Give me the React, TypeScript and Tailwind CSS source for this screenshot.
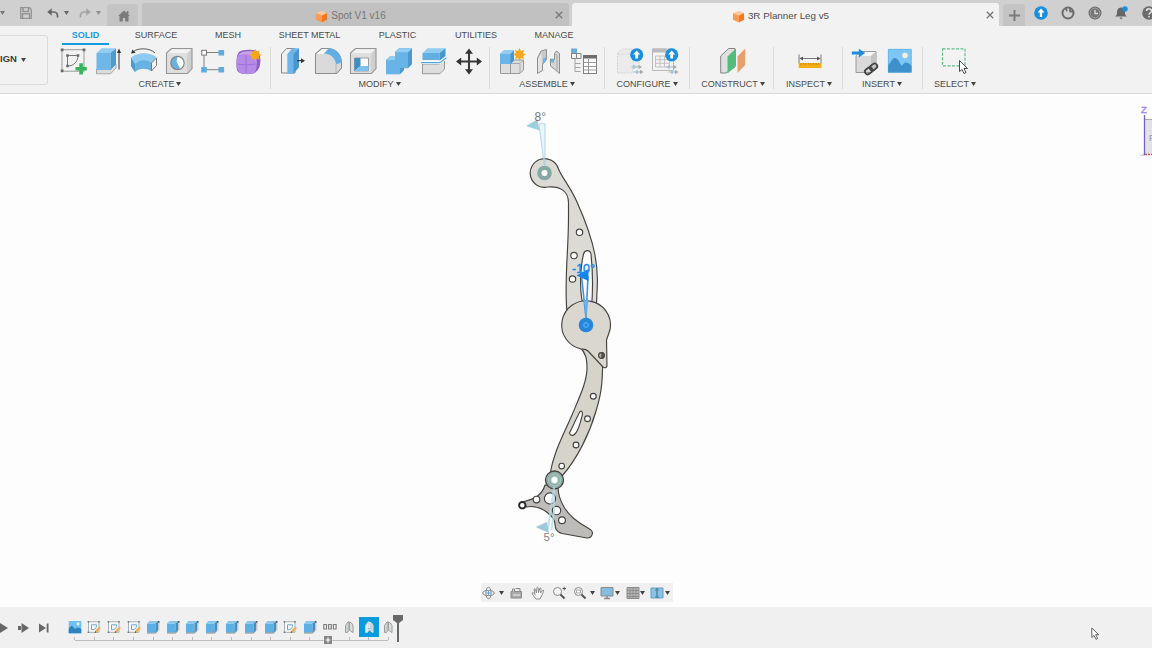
import React from "react";

type Kids = { children?: React.ReactNode };

function Ico({ children }: Kids) {
  return (
    <svg className="h-7 w-7 shrink-0 overflow-visible" viewBox="0 0 28 28" fill="none">
      {children}
    </svg>
  );
}

const Star = ({ x, y, r = 6.3 }: { x: number; y: number; r?: number }) => {
  const pts: string[] = [];
  for (let i = 0; i < 16; i++) {
    const a = (i * Math.PI) / 8 - Math.PI / 2;
    const q = i % 2 ? r * 0.58 : r;
    pts.push(`${x + Math.cos(a) * q},${y + Math.sin(a) * q}`);
  }
  return <polygon points={pts.join(" ")} fill="#f5a81c" />;
};

const UpBadge = () => (
  <>
    <circle cx="20.7" cy="7.8" r="6.6" fill="#1a8fe0" />
    <path d="M20.7 3.6l3.6 4h-2.2v4h-2.8v-4h-2.2z" fill="#fff" />
    <path d="M15.5 20h7M17.5 25h7" stroke="#a5adb1" strokeWidth="1" />
    <path d="M22.5 17.8l3.5 2.2-3.5 2.2zM24 22.8l3.5 2.2-3.5 2.2z" fill="#a5adb1" />
    <path d="M18 18v4M21 23v4" stroke="#8fc7ea" strokeWidth="1.4" />
  </>
);

const Sketch = () => (
  <Ico>
    <rect x="2" y="2.7" width="22" height="21.5" stroke="#9a9a9a" strokeWidth="1" />
    <path d="M7.500 8.500h10.500c0 6-4 10.500-10.500 10.500z" stroke="#777" strokeWidth="1" />
    <path d="M.7 1.500h2.800v2.800H.7zM22.600 1.500h2.800v2.800h-2.800zM.7 22.500h2.800v2.800H.7zM6.200 7.200h2.600v2.600H6.200zM16.700 7.200h2.600v2.600h-2.600zM6.200 17.700h2.600v2.600H6.200z" fill="#6a6a6a" />
    <path d="M19.300 16.200h3.600v3.800h3.900v3.600h-3.900v3.800h-3.600v-3.800h-3.800V20h3.800z" fill="#37b35e" />
  </Ico>
);
const Extrude = () => (
  <Ico>
    <path d="M1.500 22h14l5.500-5v4l-5.500 5.800h-14z" fill="#dcdcdc" stroke="#989898" strokeWidth=".8" />
    <path d="M1.500 6h14v17h-14z" fill="#6fb7e8" />
    <path d="M1.500 6l5-4.700H21L15.500 6z" fill="#92cdf2" />
    <path d="M15.500 6L21 1.300V17l-5.500 6z" fill="#4c9bd0" />
    <path d="M24 5v17.500" stroke="#444" strokeWidth="1.100" />
    <path d="M24 1.500l2 4.600h-4z" fill="#333" />
  </Ico>
);
const Revolve = () => (
  <Ico>
    <path d="M3.500 4.500C8 .7 20 .7 25 6" stroke="#5a5a5a" strokeWidth="1" />
    <path d="M1 6.500l1.500-4 3 3.300z" fill="#333" />
    <path d="M1 11C7 5 20 5 26.500 10.500L21 16v8c-5.500-3-11-3-16 1l-4-6z" fill="#68b1e3" />
    <path d="M1 11C7 5 20 5 26.500 10.500L21 15.500C15 12 10 12.500 5 17z" fill="#8fcbf1" />
    <path d="M1 11l4 6v8l-4-6z" fill="#4c99cd" />
    <path d="M26.500 11v7.500L21.500 24v-8z" fill="#f6f6f6" stroke="#777" strokeWidth="1" />
  </Ico>
);
const Block = () => (
  <>
    <path d="M1.500 6l5-4.500h20.500v20L22.500 26.500h-21z" fill="#cfcfcf" stroke="#969696" strokeWidth="1.100" />
    <path d="M2.200 6.500l4.800-4.200h19L22 6.500z" fill="#f3f3f3" />
    <path d="M2.100 6.500H22V26H2.100z" fill="#dedede" />
  </>
);
const Hole = () => (
  <Ico>
    <Block />
    <circle cx="12.500" cy="16" r="6.600" fill="#69b3e4" stroke="#858585" strokeWidth="1.300" />
    <path d="M12.500 10a6 6 0 016 6c0 3-2 5-4 5.700 1-3-5-5-2-11.700z" fill="#fff" />
  </Ico>
);
const Pattern = () => (
  <Ico>
    <path d="M6 5.500h14M4 8v14M6 22.700h14" stroke="#808080" strokeWidth="1" />
    <rect x="1.700" y="3.300" width="4.800" height="4.800" fill="#fff" stroke="#777" />
    <path d="M18.500 3h5.600v5.600h-5.600zM18.500 20h5.600v5.600h-5.600zM1.200 20h5.600v5.600H1.200z" fill="#5aace1" />
  </Ico>
);
const Form = () => (
  <Ico>
    <path d="M4 5c4-3 16-3 19 0s3 12 1 16-5 6-10 6S3 27 2 23s-1-15 2-18z" fill="#8f5dc4" />
    <path d="M3 9c3-2 14-2 17 0s2 13 0 16-13 3-16 0-3-13-1-16z" fill="#b58be8" />
    <path d="M3 8.500C5 3.500 17 3 21 6l-1 3C15 7 8 7 3 8.500z" fill="#c8a5f2" />
    <path d="M11 8v18M2.500 17c5 1 12 1 18 0" stroke="#9a6bd6" strokeWidth=".9" />
    <Star x={20.300} y={8} />
  </Ico>
);
const PressPull = () => (
  <Ico>
    <path d="M2.500 7l5-5.500H16V26H2.500z" fill="#f0f0f0" stroke="#868686" />
    <path d="M8.300 7l5-5.700H20V20l-5.500 6.700H8.300z" fill="#6cb5e6" />
    <path d="M14.500 7L20 1.500V20l-5.500 6.500z" fill="#4996cc" />
    <path d="M18 13.700h5" stroke="#333" strokeWidth="1.200" />
    <path d="M22 11.200l4 2.500-4 2.500z" fill="#333" />
  </Ico>
);
const Fillet = () => (
  <Ico>
    <path d="M1.500 7l6-5.500H15c7 1 12 6 12.500 14V21l-5 5.500h-21z" fill="#dadada" stroke="#8f8f8f" strokeWidth="1.100" />
    <path d="M2.500 7L8 2.300h6L9.500 7z" fill="#fafafa" />
    <path d="M10 6.500l5-5.200c7 .5 12.500 6 12.500 14L22 17.500c-.5-6-5-11-12-11z" fill="#62aee2" />
    <path d="M22 17.500v8.500" stroke="#b5b5b5" />
  </Ico>
);
const Shell = () => (
  <Ico>
    <Block />
    <path d="M5.500 11h14v13h-14z" fill="#fff" stroke="#9d9d9d" />
    <path d="M5.500 11h6v8l-6 5z" fill="#3d8dc7" />
    <path d="M11.500 19h8v5h-14z" fill="#7cc2ef" />
  </Ico>
);
const Combine = () => (
  <Ico>
    <path d="M2 13l4-3.500h5V5l4-3.700h13v16l-4 4h-4v2l-4 4H2z" fill="#4c99cf" />
    <path d="M2 13h9V5.500h13V21h-8v6H2z" fill="#69b4e7" />
    <path d="M2 13l4-3.500h5V13zM11 5.500l4-4.200h13l-4 4.200z" fill="#91cef3" />
  </Ico>
);
const Split = () => (
  <Ico>
    <path d="M3.500 17h17l5-5v10l-4.500 4.700H3.500z" fill="#dedede" stroke="#999" />
    <path d="M3.500 6h17v7h-17z" fill="#64afe1" />
    <path d="M3.500 6l5-4.700h18L20.500 6z" fill="#91cdf3" />
    <path d="M20.500 6l6-4.700v8l-6 4.700z" fill="#4996cc" />
    <path d="M2 15.500h19l6.500-5" stroke="#fff" strokeWidth="3" />
    <path d="M2 15.700h19l6.500-5" stroke="#49a4df" strokeWidth="1.200" />
  </Ico>
);
const Move = () => (
  <Ico>
    <path d="M15 5v19M5.500 14.500h19" stroke="#3b3b3b" strokeWidth="2.100" />
    <path d="M15 1.500l4 5.200h-8zM15 27.500l4-5.200h-8zM2 14.500l5.200-4v8zM28 14.500l-5.200-4v8z" fill="#333" />
  </Ico>
);
const NewComponent = () => (
  <Ico>
    <path d="M2.500 16h10v10.500h-10zM12.500 16l3-3h10v10l-3.500 3.500h-9.500z" fill="#dedede" stroke="#999" />
    <path d="M13 16.500h9l3-3M22 17v9" stroke="#aaa" />
    <path d="M2 7l4-3.500h10v10L13 17H2z" fill="#4996cc" />
    <path d="M2 7h10.500v10H2z" fill="#69b5e8" />
    <path d="M2 7l4-3.500h10L12.500 7z" fill="#91cdf3" />
    <Star x={21.500} y={7.500} r={6.500} />
  </Ico>
);
const Joint = () => (
  <Ico>
    <path d="M4.500 11L8 4l5.500-1.500v10l-2 2.500-2 2v6.500l-5 3z" fill="#c9c9c9" stroke="#8f8f8f" />
    <path d="M5 12l3.500-6L9 17v6l-4 2.500z" fill="#e3e3e3" />
    <path d="M17.500 12l4 .5V6.500l2-2.500 3 2.500v20L22 22.500l-4.500-3.500z" fill="#d5d5d5" stroke="#8f8f8f" />
    <path d="M21.500 6.500l2.500 1.800v15" stroke="#aaa" />
    <path d="M10 11.500l3-1v3.500l-3 3.500zM18 12.500h3v3.500l-3-1z" fill="#68b4e5" />
  </Ico>
);
const BomTable = () => (
  <Ico>
    <path d="M3 1.500h6v6H3z" fill="#65aede" />
    <path d="M3.500 6.500h5v5h-5zM8.500 6.500h4.500v5H8.500z" fill="#f3f3f3" stroke="#858585" />
    <path d="M7 12v12.500h5.500M7 16.500h5.500M7 20.500h5.500" stroke="#a5a5a5" />
    <rect x="15.500" y="8.500" width="13" height="18" fill="#fff" stroke="#808080" />
    <path d="M15 8h14v3.500H15z" fill="#6d6d6d" />
    <path d="M15.500 15.500h13M15.500 19.500h13M15.500 23h13M20.500 12v14" stroke="#9a9a9a" />
  </Ico>
);
const ConfigBlock = () => (
  <Ico>
    <path d="M1.500 6.500l5-4.500H18l5 5v12h-6v7H1.500z" fill="#ebebeb" stroke="#d2d2d2" strokeDasharray="2 1" />
    <path d="M2 7h15v12" stroke="#dcdcdc" />
    <UpBadge />
  </Ico>
);
const ConfigTable = () => (
  <Ico>
    <path d="M1.500 2h21v21.500h-21z" fill="#f3f3f3" stroke="#b8b8b8" />
    <path d="M1.500 1.500h14v4h-14z" fill="#bbb" />
    <path d="M4.500 9h14v11h-14zM4.500 12.700h14M4.500 16.300h14M9 9v11M13.500 9v11" stroke="#c2c2c2" />
    <UpBadge />
  </Ico>
);
const Construct = () => (
  <Ico>
    <path d="M1.700 9l8-7.500H16V20l-9 6H1.700z" fill="#e0e0e0" stroke="#858585" />
    <path d="M8.500 9.500l8.500-8v17l-8.500 8z" fill="#52bd7a" />
    <path d="M18.500 9.500l7.800-8v16.500l-7.800 8z" fill="#e5a06d" />
  </Ico>
);
const Inspect = () => (
  <Ico>
    <path d="M4 7.500v9M26 7.500v9M5 11.500h20" stroke="#787878" />
    <path d="M4.500 11.500L8 9.500v4zM25.500 11.500L22 9.500v4z" fill="#555" />
    <path d="M3.700 16h22.800v5H3.700z" fill="#f5ad15" />
    <path d="M6 16v2M8.500 16v1.500M11 16v2M13.500 16v1.500M16 16v2M18.500 16v1.500M21 16v2M23.500 16v1.500" stroke="#b7780b" strokeWidth=".7" />
  </Ico>
);
const InsertLink = () => (
  <Ico>
    <path d="M5 9l4-4.500h16V20l-4 5.500H5z" fill="#dadada" stroke="#9a9a9a" />
    <path d="M5.500 9h14l5-4H9.500z" fill="#f8f8f8" />
    <path d="M20 9l5-4.500V20l-5 5z" fill="#c3c3c3" />
    <path d="M.8 4.500h7V1.700l6.400 4.400-6.400 4.400V7.600h-7z" fill="#1d8edd" />
    <g transform="rotate(-38 20 22)" stroke="#454545" strokeWidth="1.800">
      <rect x="13" y="19.300" width="8" height="5.400" rx="2.700" />
      <rect x="19.200" y="19.300" width="8" height="5.400" rx="2.700" />
    </g>
  </Ico>
);
const Picture = () => (
  <Ico>
    <path d="M2 2h23.500v23.500H2z" fill="#7dc6f6" />
    <path d="M2 18c3-2 4-7 7-7s5 6 7 8c2-4 5-5 9.500 0v6.500H2z" fill="#3d90c9" />
    <circle cx="19" cy="8.500" r="2.700" fill="#f4f1db" />
    <path d="M2.300 2.300h23v23h-23z" stroke="#5ba6d5" strokeWidth=".6" />
  </Ico>
);
const Select = () => (
  <Ico>
    <rect x="1.500" y="1.800" width="22.500" height="17" stroke="#5cbf81" strokeWidth="1.200" strokeDasharray="3 1.500" />
    <path d="M18.500 13.500v11l2.500-2 2 4 2-1-2-4h3.500z" fill="#fff" stroke="#4c4c4c" />
  </Ico>
);

const Caret = ({ className = "text-[#444]" }: { className?: string }) => (
  <svg className={`h-1 w-[5px] shrink-0 ${className}`} viewBox="0 0 5 4">
    <path d="M0 0h5L2.500 4z" fill="currentColor" />
  </svg>
);

const groups: { name: string; box: string; label: string; icons: React.FC[] }[] = [
  { name: "CREATE", box: "w-[219px] border-r", label: "pr-[2px]", icons: [Sketch, Extrude, Revolve, Hole, Pattern, Form] },
  { name: "MODIFY", box: "w-[219px] border-r", label: "pr-[1px]", icons: [PressPull, Fillet, Shell, Combine, Split, Move] },
  { name: "ASSEMBLE", box: "w-[115px] border-r", label: "", icons: [NewComponent, Joint, BomTable] },
  { name: "CONFIGURE", box: "w-[85px] border-r", label: "", icons: [ConfigBlock, ConfigTable] },
  { name: "CONSTRUCT", box: "w-[84px] border-r pl-[3px]", label: "", icons: [Construct] },
  { name: "INSPECT", box: "w-[69px] border-r pl-[2px]", label: "", icons: [Inspect] },
  { name: "INSERT", box: "w-[80px] border-r", label: "pr-[1px]", icons: [InsertLink, Picture] },
  { name: "SELECT", box: "w-[64px]", label: "", icons: [Select] },
];

const tabs = [
  { name: "SURFACE", w: "w-[94px]" },
  { name: "MESH", w: "w-[50px]" },
  { name: "SHEET METAL", w: "w-[113px]" },
  { name: "PLASTIC", w: "w-[63px]" },
  { name: "UTILITIES", w: "w-[94px]" },
  { name: "MANAGE", w: "w-[62px]" },
];

const Cube = () => (
  <svg className="h-[13px] w-[13px]" viewBox="0 0 13 14">
    <path d="M.5 3.500L7 .7l5.500 2.500L7 6z" fill="#f9c89c" />
    <path d="M.5 3.500L7 6v7.500L.5 10.500z" fill="#fa9a55" />
    <path d="M12.500 3.200L7 6v7.500l5.500-3z" fill="#f5761c" />
  </svg>
);

const Close = () => (
  <svg className="h-2 w-2" viewBox="0 0 8 8">
    <path d="M.8.800l6.400 6.400M7.200.800L.8 7.200" stroke="#777" strokeWidth="1.300" />
  </svg>
);

function TitleBar() {
  return (
    <header className="flex h-[26px] shrink-0 items-end bg-[#d0d0d0]">
      <div className="flex h-[26px] w-[107px] items-center text-[#777]">
        <Caret className="text-[#777]" />
        <svg className="ml-[15px] h-3 w-3" viewBox="0 0 12 12">
          <path d="M.7.7h8.800l1.800 1.800v8.800H.7z" fill="none" stroke="#959595" strokeWidth="1.300" />
          <path d="M3 1v3.500h5.500V1M2.500 11V6.800h7V11" fill="none" stroke="#959595" strokeWidth="1.500" />
        </svg>
        <svg className="ml-[15px] h-[11px] w-3" viewBox="0 0 12 11">
          <path d="M2 4h5c2.500 0 4 2 3.500 5.500" fill="none" stroke="#666" strokeWidth="1.700" />
          <path d="M.2 4L4.700.2v7.600z" fill="#666" />
        </svg>
        <Caret className="ml-[5px] text-[#666]" />
        <svg className="ml-[10px] h-[11px] w-3" viewBox="0 0 12 11">
          <path d="M10 4H5C2.500 4 1 6 1.500 9.500" fill="none" stroke="#a3a3a3" strokeWidth="1.600" />
          <path d="M11.800 4L7.300.2v7.600z" fill="#a3a3a3" />
        </svg>
        <Caret className="ml-[5px] text-[#8f8f8f]" />
      </div>
      <div className="flex h-[22px] w-[31px] items-center justify-center rounded-t-[3px] bg-[#c4c4c4] pl-[3px] pt-[2px]">
        <svg className="h-3 w-3" viewBox="0 0 12 12">
          <path d="M6 .5L12 6h-1.500v5.500H7.200V8H4.800v3.500H1.500V6H0z" fill="#7b7b7b" />
          <path d="M8.800 1h1.700v3H8.800z" fill="#7b7b7b" />
        </svg>
      </div>
      <div className="ml-1 flex h-[23px] w-[427px] items-center justify-center rounded-t-[3px] bg-[#c1c1c1]">
        <div className="flex flex-1 items-center justify-center gap-[3px] pl-[4px] pt-[3px] text-[10px] leading-[14px] text-[#777]">
          <Cube />
          <span>Spot V1 v16</span>
        </div>
        <div className="pr-[6px]"><Close /></div>
      </div>
      <div className="ml-[3px] flex h-[23px] w-[427px] items-center rounded-t-[3px] bg-[#f2f2f2]">
        <div className="flex flex-1 items-center justify-center gap-[3px] pl-[3px] pt-[3px] text-[9.800px] leading-[14px] text-[#4e4e4e]">
          <Cube />
          <span>3R Planner Leg v5</span>
        </div>
        <div className="pr-[5px]"><Close /></div>
      </div>
      <div className="ml-1 flex h-[22px] w-[22px] items-center justify-center rounded-t-[3px] bg-[#c4c4c4]">
        <svg className="h-[11px] w-[11px]" viewBox="0 0 11 11"><path d="M5.500 0v11M0 5.500h11" stroke="#7b7b7b" strokeWidth="2" /></svg>
      </div>
      <div className="flex h-[26px] w-[127px] items-center gap-[13px] overflow-hidden pl-[9px]">
        <svg className="h-[14px] w-[14px] shrink-0" viewBox="0 0 14 14">
          <circle cx="7" cy="7" r="6.800" fill="#168fe0" />
          <path d="M7 2.500L10.500 6.500H8.200V11H5.800V6.500H3.500z" fill="#fff" />
        </svg>
        <svg className="h-[14px] w-[14px] shrink-0" viewBox="0 0 14 14">
          <circle cx="7" cy="7" r="5.500" fill="#d0d0d0" stroke="#6c6c6c" strokeWidth="2" />
          <path d="M4.500 2.500l1.500 3M8.500 5.500h3.500M9 2v3.500" fill="none" stroke="#6c6c6c" strokeWidth="1.800" />
          <path d="M3 4l2.500 1.500" stroke="#d0d0d0" strokeWidth="1" />
        </svg>
        <svg className="h-[14px] w-[14px] shrink-0" viewBox="0 0 14 14">
          <circle cx="7" cy="7" r="5.600" fill="#777" stroke="#6c6c6c" strokeWidth="1.800" />
          <circle cx="7" cy="7" r="4.900" fill="none" stroke="#b5b5b5" strokeWidth=".7" />
          <path d="M7 4v3.500h3" fill="none" stroke="#d9d9d9" strokeWidth="1.400" />
        </svg>
        <svg className="h-[14px] w-[14px] shrink-0" viewBox="0 0 14 14">
          <path d="M6 1.500c3 0 4 2.500 4 5s.5 3 2 4H0c1.500-1 2-2 2-4s1-5 4-5zM4.500 11.500h3L6 13.500z" fill="#666" />
          <circle cx="10" cy="3" r="2.700" fill="#168fe0" />
        </svg>
        <svg className="h-[14px] w-[14px] shrink-0" viewBox="0 0 14 14">
          <circle cx="7" cy="7" r="6.800" fill="#6c6c6c" />
          <path d="M4.500 5c0-3 5-3 5 0 0 2-2.500 2-2.500 3.700M7 10v1.500" fill="none" stroke="#e5e5e5" strokeWidth="1.500" />
        </svg>
      </div>
    </header>
  );
}

function Toolbar() {
  return (
    <div className="flex h-[68px] shrink-0 border-b border-[#d8d8d8] bg-[#f2f2f2] text-[9px] text-[#4b4b4b]">
      <div className="mt-[9px] flex h-[50px] w-12 items-center gap-[4px] rounded-r-[3px] border border-l-0 border-[#dadada] pb-[1px] text-[9.500px] font-bold text-[#3b3b3b]">
        <span>IGN</span>
        <Caret />
      </div>
      <div className="flex flex-col pl-1">
        <nav className="flex h-[19px] pl-[10px]">
          <div className="flex w-[47px] flex-col items-center justify-between border-b-2 border-[#169ce0] pt-[4px] font-bold leading-[11px] text-[#189ade]">SOLID</div>
          {tabs.map((t) => (
            <div key={t.name} className={`pt-[4px] text-center leading-[11px] ${t.w}`}>{t.name}</div>
          ))}
        </nav>
        <div className="flex pt-[2px]">
          {groups.map((g) => (
            <div key={g.name} className={`flex h-[42px] flex-col items-center border-[#d9d9d9] ${g.box}`}>
              <div className="flex gap-[7px]">
                {g.icons.map((Icon, i) => <Icon key={i} />)}
              </div>
              <div className={`mt-[4px] flex items-center gap-[2px] leading-[11px] ${g.label}`}>
                <span>{g.name}</span>
                <Caret className="mb-[1px] text-[#444]" />
              </div>
            </div>
          ))}
        </div>
      </div>
    </div>
  );
}

function Leg() {
  return (
    <svg className="block h-[489px] w-[1152px]" viewBox="0 94 1152 489" fill="none">
      <g stroke="#45433f" strokeWidth="1.150" strokeLinejoin="round">
        <path
          fill="#dcdad4"
          fillRule="evenodd"
          d="M567 312C564 284 568.500 250 568.500 218V203C568.500 191 560 186 548 187A14.400 14.400 0 1 1 558.300 168.500C562 178 570 186 577 202C585 220 592 239 595 255C599 277 597 290 596 312ZM584 308C579 294 580 269 583.500 254C585 249.500 590 249.500 591 254C592.500 268 593 290 591.500 308Z"
        />
        <path fill="#d5d3ca" d="M579 346C586 353 587 359 587 368C587 382 579 398 572 415C561 440 554 452 550 474L562 476C578 458 590 432 596 411C600 398 603 386 602.500 360L590 340Z" />
        <path fill="#d9d7d0" d="M606.500 340L607 366Q606 369 603 367L588 351Q586 349 582 349.200A24.400 24.400 0 1 1 610.200 329Q609 333 606.500 340Z" />
        <path fill="#fff" d="M580 411.500C576 419 572 428 569.500 433C570 436 573 436 575 434C579 430 581 420 582.500 414Q582 410 580 411.500Z" />
        <path fill="#bdbcb9" d="M545 485C542 495 535 499 524 501.500L526 507C537 505 544 509 550 515C555 519 555 523 555.500 528Q557 532 562 533.500L587 538Q592 538 592.500 533Q592 530 588 528C577 522 569 516 564 507C560 500 558 495 558 487Z" />
        <circle cx="601.500" cy="355.500" r="2.900" fill="#b5b3ac" />
        <path d="M601.500 352.600A2.900 2.900 0 0 1 601.500 358.400Z" fill="#55534e" strokeWidth=".5" />
        <g fill="#fff">
          <circle cx="579.500" cy="232.300" r="3.200" />
          <circle cx="574" cy="255.500" r="3.200" />
          <circle cx="572.500" cy="279" r="3.200" />
          <circle cx="593.300" cy="396.300" r="2.900" />
          <circle cx="587.500" cy="418.700" r="2.900" />
          <circle cx="576" cy="445" r="2.900" />
          <circle cx="561.700" cy="466" r="2.800" />
          <circle cx="536.500" cy="499.500" r="3.300" />
          <circle cx="550" cy="498.500" r="5.600" />
          <circle cx="556.500" cy="510.500" r="4.200" />
          <circle cx="562" cy="520.300" r="3.400" />
          <circle cx="522.300" cy="505.200" r="3.200" strokeWidth="1.900" stroke="#282828" />
        </g>
        <circle cx="554.500" cy="480" r="9" fill="#91aaa7" strokeWidth="1.300" />
      </g>
      <circle cx="544.500" cy="173" r="5.500" fill="#fff" stroke="#82a9a4" strokeWidth="3.500" />
      <circle cx="544.500" cy="173" r="3.700" stroke="#668883" strokeWidth=".8" />
      <circle cx="554.500" cy="480" r="6" stroke="#a9cfc8" strokeWidth="1" />
      <circle cx="554.500" cy="480" r="3.500" fill="#fff" stroke="#b8d8d2" strokeWidth="1" />
      <path d="M544.500 166L539 125C541 123 543 123 545 124V165" fill="#c5e3ed" fillOpacity=".3" stroke="#a4cedb" strokeOpacity=".7" strokeWidth="1.200" />
      <path d="M526 126L537.500 119.500L539.500 130.500Z" fill="#9dcfe1" />
      <path d="M554 487V512L551.500 530M554 487L548 529" stroke="#b4d9e5" strokeOpacity=".75" strokeWidth="2" />
      <path d="M535.500 527L547 522L549 533Z" fill="#9dcadb" />
      <path d="M586 318L581.500 276M586 318L588 276" stroke="#3e93dd" strokeWidth="1.600" />
      <path d="M584 300L586 322L588.500 300Z" fill="#79b6e8" fillOpacity=".7" />
      <path d="M576.500 275.500L588.500 269V281Z" fill="#1686e5" />
      <circle cx="586" cy="325" r="7.300" fill="#2487dc" />
      <circle cx="586" cy="325" r="2.300" stroke="#71b8f4" strokeWidth="1" />
      <text x="534.500" y="120.500" fontSize="12" fill="#777">8°</text>
      <text x="572" y="272.500" fontSize="12.500" fill="#1f8df0" stroke="#1f8df0" strokeWidth=".5">-10°</text>
      <text x="543.500" y="541" fontSize="11.500" fill="#858585">5°</text>
      <path d="M1145 120H1152V154H1145Z" fill="#e3e3e3" />
      <path d="M1145 119.500H1152" stroke="#aaa" />
      <path d="M1139 156l6-3v3z" fill="#d5d5d5" />
      <text x="1149" y="141" fontSize="9" fill="#999">F</text>
      <path d="M1144.500 115V155" stroke="#7562bf" strokeWidth="1.300" />
      <path d="M1145 154.500H1152" stroke="#e74b4b" strokeWidth="1.500" strokeDasharray="2 1" />
      <text x="1141" y="112.500" fontSize="9.500" fill="#a080e4" stroke="#a080e4" strokeWidth=".3">Z</text>
    </svg>
  );
}

const NavIcon = ({ children }: Kids) => (
  <svg className="h-[14px] w-[14px] shrink-0" viewBox="0 0 14 14" fill="none" stroke="#8a8a8a">{children}</svg>
);

function ViewBar() {
  return (
    <div className="ml-[481px] flex h-[19px] w-[192px] items-center bg-[#f0f0f0]">
      <NavIcon>
        <ellipse cx="7.500" cy="7" rx="5.800" ry="2.600" />
        <ellipse cx="7.500" cy="7" rx="2.600" ry="5.800" />
        <path d="M7.500 5v4M5.500 7h4" stroke="#54a6d8" />
      </NavIcon>
      <Caret className="ml-[4px] mr-[6px] text-[#444]" />
      <NavIcon>
        <path d="M1 5.500h10.500v6.500H1z" fill="#aaa" /><path d="M2.500 5.500V3h2v2.500M5.500 2.500h4.500v3" fill="#ddd" /><path d="M3 9h7" stroke="#eee" />
      </NavIcon>
      <span className="w-[7px]" />
      <NavIcon>
        <path d="M4 12C3 10 1.500 8.500 1 7c1-1 2 0 3 1.500L3 3c1-1 1.500 0 2.500 4L6 1.500c1-.8 1.500 0 1.500 5L9 2c1-.5 1.500 0 .5 5L12 4c1 0 1 1-1 5l-2 4H5z" fill="#f8f8f8" />
      </NavIcon>
      <span className="w-[7px]" />
      <NavIcon>
        <circle cx="5.500" cy="5.500" r="4" fill="#f7f7f7" /><path d="M8.500 8.500L12.500 12.500" stroke="#555" strokeWidth="2" /><path d="M10.500 2.500h3.500M12.200.800v3.500" stroke="#555" />
      </NavIcon>
      <span className="w-[7px]" />
      <NavIcon>
        <circle cx="5.500" cy="5.500" r="4" fill="#f7f7f7" /><path d="M3.500 4h4v3h-4z" stroke="#aaa" /><path d="M8.500 8.500L12.500 12.500" stroke="#555" strokeWidth="2" />
      </NavIcon>
      <Caret className="ml-[3px] mr-[5px] text-[#444]" />
      <NavIcon>
        <path d="M1 1.500h12v8.500H1z" fill="#85bde0" /><path d="M4 12.500h6M7 10v2" strokeWidth="1.500" />
      </NavIcon>
      <Caret className="ml-[1px] mr-[6px] text-[#444]" />
      <NavIcon>
        <path d="M1 1.500h12v11H1z" fill="#b5b5b5" /><path d="M4 2v10.500M7 2v10.500M10 2v10.500M1 4.500h12M1 7.500h12M1 10.500h12" stroke="#8f8f8f" />
      </NavIcon>
      <Caret className="mr-[5px] text-[#444]" />
      <NavIcon>
        <path d="M1 2h12v10H1z" fill="#88c2e6" stroke="#6a9dbd" /><path d="M7 2v10" stroke="#36698b" /><path d="M5 4h4M5 11h4" stroke="#4b86aa" />
      </NavIcon>
      <Caret className="ml-[1px] text-[#444]" />
    </div>
  );
}

type Step = "image" | "sketch" | "extrude" | "group" | "joint" | "active";
const steps: Step[] = [
  "image", "sketch", "sketch", "sketch", "extrude", "extrude", "extrude", "extrude", "extrude",
  "extrude", "extrude", "sketch", "extrude", "group", "joint", "active", "joint",
];

function StepIcon({ kind }: { kind: Step }) {
  return (
    <svg className="h-[14px] w-[14px] overflow-visible" viewBox="0 0 14 14" fill="none">
      {kind === "image" && (
        <>
          <path d="M.7 1h12.600v12.300H.7z" fill="#72c0f2" />
          <path d="M.7 9c2-4 4-4 6 0 2-2 4-2 6.600 0v4.300H.7z" fill="#2c83bd" />
          <circle cx="10" cy="4" r="1.400" fill="#f4f1db" />
        </>
      )}
      {kind === "sketch" && (
        <>
          <path d="M1.500 1.800h10.500v10.500H1.500z" fill="#f8f8f8" stroke="#a7b1b7" />
          <path d="M4.500 4.800h5c0 3-1 5-5 5z" stroke="#68a8ce" />
          <path d="M.6 1h1.600v1.600H.6zM11.200 1h1.600v1.600h-1.600zM.6 11.500h1.600v1.600H.6z" fill="#777" />
          <path d="M7.500 13l1-3 4-3.500 1.300 1.500-4 4.500z" fill="#edad57" />
          <path d="M7.500 13l.7-2 1.200 1.500z" fill="#555" />
        </>
      )}
      {kind === "extrude" && (
        <>
          <path d="M1 11h8.500l2.500-2v2.500L9.500 13.700H1z" fill="#aaa" />
          <path d="M1 3.500h8.500v9H1z" fill="#5eb0e4" />
          <path d="M1 3.500L3.500 1H12L9.500 3.500z" fill="#87c7ef" />
          <path d="M9.500 3.500L12 1v9l-2.500 2.500z" fill="#4490c4" />
          <path d="M12.800 2.500v8" stroke="#b5b5b5" />
          <path d="M12 1h1.500v1.700H12z" fill="#555" />
        </>
      )}
      {kind === "group" && <path d="M.8 4.500h2.700v4.500H.8zM5.600 4.500h2.700v4.500H5.600zM10.400 4.500h2.700v4.500h-2.700z" stroke="#808080" strokeWidth="1.200" />}
      {(kind === "joint" || kind === "active") && (
        <>
          <path d="M3.500 5.500L6 2l1-.2V10l-1.500 2.500h-2z" fill={kind === "active" ? "#e5edf0" : "#d2d2d2"} stroke={kind === "active" ? "#bed1d8" : "#9c9c9c"} />
          <path d="M7.500 2l2 1L11 5.500v7L8.500 11l-1-1z" fill={kind === "active" ? "#c6d5da" : "#dedede"} stroke={kind === "active" ? "#dce6e9" : "#9c9c9c"} />
          <path d="M5.500 8.500h3" stroke="#9abbc9" />
        </>
      )}
    </svg>
  );
}

function Timeline() {
  return (
    <footer className="flex h-[41px] shrink-0 bg-[#f0f0f0] pt-[10px]">
      <div className="flex h-[21px] w-[65px] items-center">
        <svg className="h-3 w-2" viewBox="0 0 8 12"><path d="M0 1l8 5-8 5z" fill="#666" /></svg>
        <svg className="ml-[10px] h-3 w-[11px]" viewBox="0 0 11 12"><path d="M0 4h3v4H0zM3.500 1L11 6l-7.500 5z" fill="#686868" /></svg>
        <svg className="ml-[10px] h-3 w-[10px]" viewBox="0 0 10 12"><path d="M0 1.500L7 6l-7 4.500zM7.700 1.500h1.800v9H7.700z" fill="#666" /></svg>
      </div>
      <div className="flex">
        {steps.map((s, i) => (
          <div key={i} className="relative flex w-[19.600px] flex-col items-center">
            <div className={s === "active" ? "flex h-5 w-5 items-center justify-center bg-[#089bdd]" : "flex h-5 w-5 items-center justify-center"}>
              <StepIcon kind={s} />
            </div>
            <div className="flex h-[3px] w-full justify-center">
              <span className="w-px bg-[#bbb]" />
            </div>
            <div className={i === 0 ? "h-px w-1/2 self-end bg-[#bdbdbd]" : i === steps.length - 1 ? "h-px w-1/2 self-start bg-[#bdbdbd]" : "h-px w-full bg-[#bdbdbd]"} />
            {s === "group" && (
              <svg className="absolute left-[4px] top-[19px] h-2 w-2" viewBox="0 0 8 8">
                <path d="M0 0h8v8H0z" fill="#858585" />
                <path d="M4 1.500v5M1.500 4h5" stroke="#fff" strokeWidth="1.200" />
              </svg>
            )}
          </div>
        ))}
      </div>
      <svg className="-ml-[5px] -mt-[2px] h-[27px] w-[10px]" viewBox="0 0 10 27">
        <path d="M0 0h10v5L6 8v19H4V8L0 5z" fill="#686868" />
      </svg>
      <svg className="ml-[688px] mt-[10px] h-[13px] w-[9px]" viewBox="0 0 9 13">
        <path d="M.8 1v9.500l2.200-2 2 3.800 1.700-.8-2-3.800h3z" fill="#fff" stroke="#555" strokeWidth=".9" />
      </svg>
    </footer>
  );
}

export default function App() {
  return (
    <div className="flex h-[648px] w-[1152px] flex-col overflow-hidden bg-[#fdfdfd] font-['Liberation_Sans',Arial,sans-serif]">
      <TitleBar />
      <Toolbar />
      <main className="h-[513px] shrink-0 overflow-hidden">
        <Leg />
        <ViewBar />
      </main>
      <Timeline />
    </div>
  );
}
